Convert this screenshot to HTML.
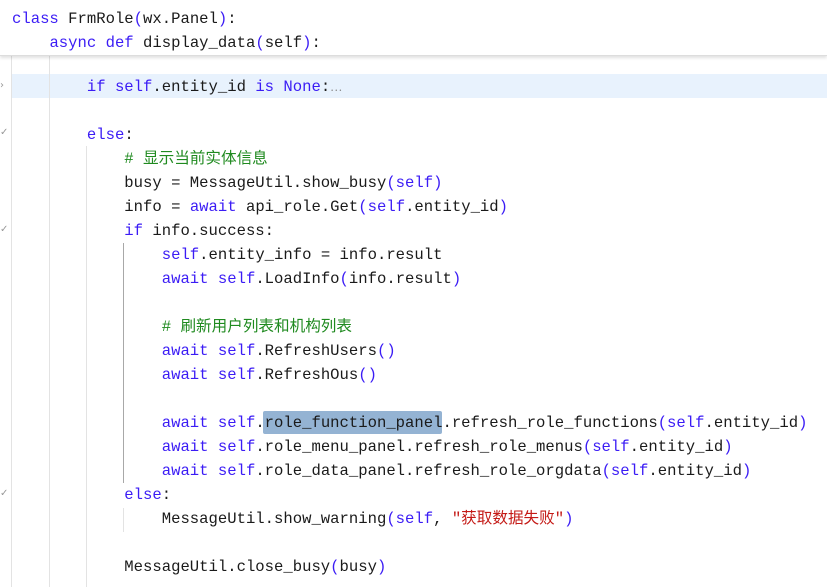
<!DOCTYPE html>
<html><head><meta charset="utf-8"><style>
html,body{margin:0;padding:0;width:827px;height:587px;overflow:hidden;background:#fff}
body{position:relative;font-family:"Liberation Mono","Noto Sans CJK SC",monospace;font-size:15.6px;color:#1a1a1a}
.l{position:absolute;left:12px;height:24px;line-height:24px;white-space:pre;margin-top:1px}
.k{color:#3b1cf5}.c{color:#1f8a1f}.s{color:#c41a16}
.g{position:absolute;width:1px;background:#e3e3e3}
.hdr{position:absolute;left:0;top:0;width:827px;height:55px;background:#fff;box-shadow:0 2px 3px rgba(0,0,0,0.12);border-bottom:1px solid #ddd;z-index:5}
.f{position:absolute;left:0;color:#999;font-size:10px;font-family:"DejaVu Sans",sans-serif}
</style></head><body>
<div style="position:absolute;left:11px;top:74px;width:816px;height:24px;background:#e8f2fd"></div>
<div style="position:absolute;left:263px;top:411px;width:179px;height:23px;background:#94b3d3;border-radius:2px"></div>
<div class="g" style="left:11px;top:55px;height:532px"></div>
<div class="g" style="left:49px;top:55px;height:532px"></div>
<div class="g" style="left:86px;top:146px;height:441px"></div>
<div class="g" style="left:123px;top:243px;height:240px;background:#a8a8a8"></div>
<div class="g" style="left:123px;top:508px;height:24px"></div>
<div class="f" style="top:80px">›</div>
<div class="f" style="top:127px">✓</div>
<div class="f" style="top:224px">✓</div>
<div class="f" style="top:488px">✓</div>
<div class="hdr">
<div class="l" style="top:6px"><span class="k">class</span> FrmRole<span class="k">(</span>wx.Panel<span class="k">)</span>:</div>
<div class="l" style="top:30px">    <span class="k">async def</span> display_data<span class="k">(</span>self<span class="k">)</span>:</div>
</div>
<div class="l" style="top:74px">        <span class="k">if self</span>.entity_id <span class="k">is None</span>:<span style="color:#888;font-size:11px">⋯</span></div>
<div class="l" style="top:122px">        <span class="k">else</span>:</div>
<div class="l" style="top:146px">            <span class="c"># 显示当前实体信息</span></div>
<div class="l" style="top:170px">            busy = MessageUtil.show_busy<span class="k">(self)</span></div>
<div class="l" style="top:194px">            info = <span class="k">await</span> api_role.Get<span class="k">(self</span>.entity_id<span class="k">)</span></div>
<div class="l" style="top:218px">            <span class="k">if</span> info.success:</div>
<div class="l" style="top:242px">                <span class="k">self</span>.entity_info = info.result</div>
<div class="l" style="top:266px">                <span class="k">await self</span>.LoadInfo<span class="k">(</span>info.result<span class="k">)</span></div>
<div class="l" style="top:314px">                <span class="c"># 刷新用户列表和机构列表</span></div>
<div class="l" style="top:338px">                <span class="k">await self</span>.RefreshUsers<span class="k">()</span></div>
<div class="l" style="top:362px">                <span class="k">await self</span>.RefreshOus<span class="k">()</span></div>
<div class="l" style="top:410px">                <span class="k">await self</span>.role_function_panel.refresh_role_functions<span class="k">(self</span>.entity_id<span class="k">)</span></div>
<div class="l" style="top:434px">                <span class="k">await self</span>.role_menu_panel.refresh_role_menus<span class="k">(self</span>.entity_id<span class="k">)</span></div>
<div class="l" style="top:458px">                <span class="k">await self</span>.role_data_panel.refresh_role_orgdata<span class="k">(self</span>.entity_id<span class="k">)</span></div>
<div class="l" style="top:482px">            <span class="k">else</span>:</div>
<div class="l" style="top:506px">                MessageUtil.show_warning<span class="k">(self</span>, <span class="s">"获取数据失败"</span><span class="k">)</span></div>
<div class="l" style="top:554px">            MessageUtil.close_busy<span class="k">(</span>busy<span class="k">)</span></div>
</body></html>
